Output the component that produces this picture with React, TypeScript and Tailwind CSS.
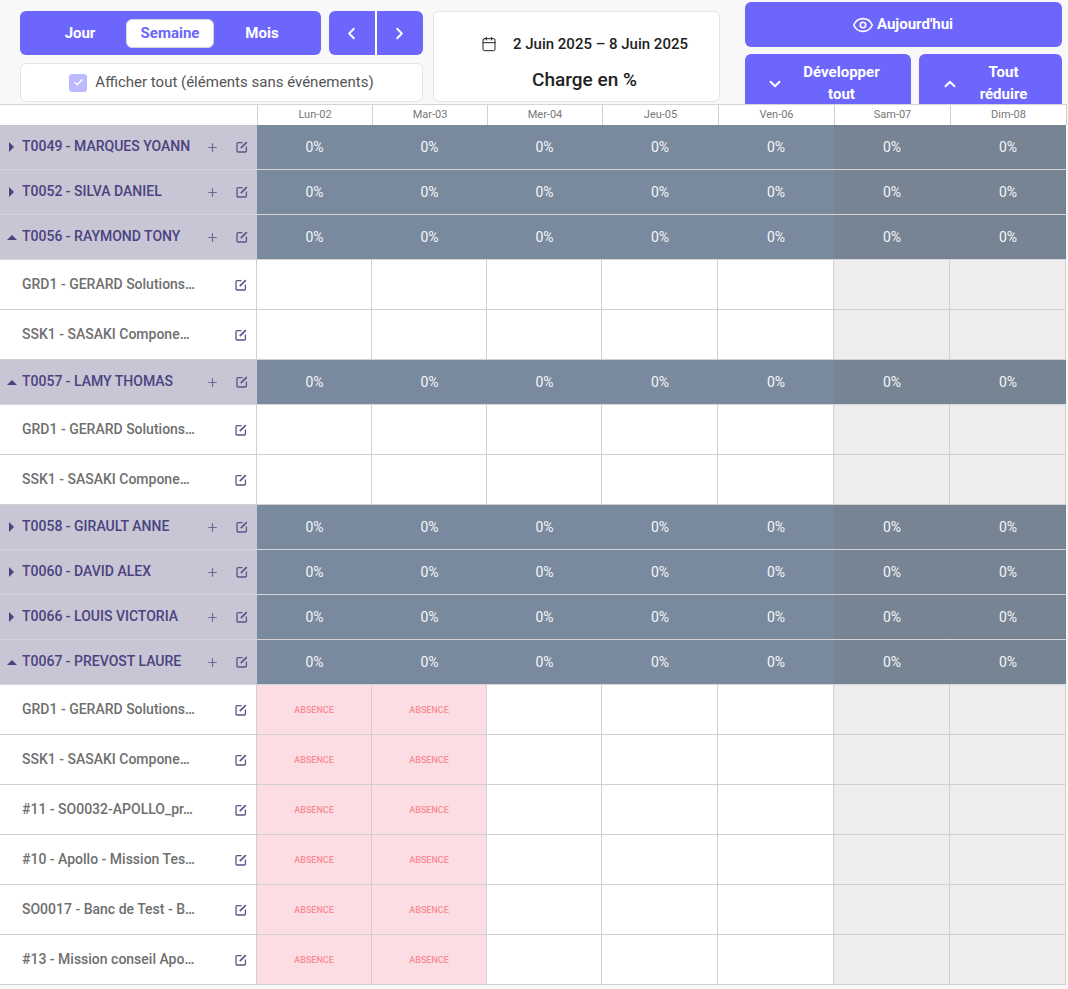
import React from 'react';
import { Calendar, Check, ChevronDown, ChevronLeft, ChevronRight, ChevronUp, Eye, Plus } from 'lucide-react';

const days = ['Lun-02', 'Mar-03', 'Mer-04', 'Jeu-05', 'Ven-06', 'Sam-07', 'Dim-08'];

const grd = 'GRD1 - GERARD Solutions…';
const ssk = 'SSK1 - SASAKI Compone…';

type Group = { name: string; open?: boolean; subs?: string[]; absent?: boolean };

const groups: Group[] = [
  { name: 'T0049 - MARQUES YOANN' },
  { name: 'T0052 - SILVA DANIEL' },
  { name: 'T0056 - RAYMOND TONY', open: true, subs: [grd, ssk] },
  { name: 'T0057 - LAMY THOMAS', open: true, subs: [grd, ssk] },
  { name: 'T0058 - GIRAULT ANNE' },
  { name: 'T0060 - DAVID ALEX' },
  { name: 'T0066 - LOUIS VICTORIA' },
  {
    name: 'T0067 - PREVOST LAURE',
    open: true,
    absent: true,
    subs: [
      grd,
      ssk,
      '#11 - SO0032-APOLLO_pr…',
      '#10 - Apollo - Mission Tes…',
      'SO0017 - Banc de Test - B…',
      '#13 - Mission conseil Apo…',
    ],
  },
];

const EditIcon = () => (
  <svg width="12" height="12" viewBox="0 0 12 12" fill="none" className="shrink-0 text-[#5b5489]" stroke="currentColor">
    <path d="M6.5 1.6H2a1 1 0 0 0-1 1v7.4a1 1 0 0 0 1 1h7.4a1 1 0 0 0 1-1V5.5" strokeWidth="1.3" />
    <path d="M4.8 7.2 10.8 1.2" strokeWidth="1.7" />
  </svg>
);

const GroupRow = ({ group }: { group: Group }) => (
  <div className="flex h-[45px] border-b border-[#d4d4d8]">
    <div className="flex w-[257px] shrink-0 items-center bg-[#c8c5d4] pl-[7px] pr-[9px] text-[#4a4380]">
      <span className="flex w-[15px] shrink-0 items-center">
        {group.open ? (
          <svg width="10" height="5" viewBox="0 0 10 5" className="fill-[#4a4380]">
            <path d="M5 0 L10 5 L0 5 Z" />
          </svg>
        ) : (
          <svg width="5" height="10" viewBox="0 0 5 10" className="ml-[2px] fill-[#4a4380]">
            <path d="M0 0 L5 5 L0 10 Z" />
          </svg>
        )}
      </span>
      <span className="flex-1 -translate-y-px truncate text-[14px] font-medium">{group.name}</span>
      <Plus size={13} strokeWidth={2.25} className="mr-[17px] text-[#6f6a94]" />
      <EditIcon />
    </div>
    <div className="grid flex-1 grid-cols-[115px_115px_115px_116px_116px_116px_116px] bg-[#7a8a9e]">
      {days.map((d, i) => (
        <div
          key={d}
          className={`flex items-center justify-center text-[14px] text-[#f4f6f8] ${
            i > 4 ? 'border-r border-[#74818f] bg-[#778494] pl-[1px]' : ''
          }`}
        >
          0%
        </div>
      ))}
    </div>
  </div>
);

const SubRow = ({ label, absent }: { label: string; absent?: boolean }) => (
  <div className="flex h-[50px] border-b border-[#d0d0d0]">
    <div className="flex w-[257px] shrink-0 items-center border-r border-[#d0d0d0] bg-white pl-[22px] pr-[9px]">
      <span className="flex-1 truncate text-[14px] font-medium text-[#6f6f6f]">{label}</span>
      <EditIcon />
    </div>
    <div className="grid flex-1 grid-cols-[115px_115px_115px_116px_116px_116px_116px]">
      {days.map((d, i) => (
        <div
          key={d}
          className={`flex items-center justify-center border-r border-[#d0d0d0] pt-[2px] text-[9px] font-medium text-[#f98c94] ${
            i > 4 ? 'bg-[#eeeeee]' : absent && i < 2 ? 'bg-[#fcdde4]' : 'bg-white'
          }`}
        >
          {absent && i < 2 ? 'ABSENCE' : ''}
        </div>
      ))}
    </div>
  </div>
);

export default function App() {
  return (
    <div className="min-h-[989px] w-[1068px] overflow-hidden bg-[#f8f8f8] font-['Roboto',sans-serif]">
      <div className="flex h-[104px] overflow-hidden">
        <div className="ml-[20px] mt-[11px] flex w-[403px] flex-col gap-[8px]">
          <div className="flex h-[44px] gap-[8px]">
            <div className="flex w-[301px] items-center rounded-md bg-[#6c66fd] pl-[14px] text-[15px] font-bold text-white">
              <span className="w-[92px] text-center">Jour</span>
              <span className="flex h-[29px] w-[88px] items-center justify-center rounded-md border border-[#d4d4d8] bg-white text-[#6c66fd]">
                Semaine
              </span>
              <span className="w-[96px] text-center">Mois</span>
            </div>
            <div className="flex flex-1 overflow-hidden rounded-md bg-[#6c66fd] text-white">
              <span className="flex w-[48px] items-center justify-center border-r-2 border-white pr-[1px]">
                <ChevronLeft size={19} strokeWidth={2.25} />
              </span>
              <span className="flex flex-1 items-center justify-center pr-[2px]">
                <ChevronRight size={19} strokeWidth={2.25} />
              </span>
            </div>
          </div>
          <div className="flex h-[39px] items-center justify-center gap-[8px] rounded-md border border-[#e4e4e7] bg-white text-[15px] text-[#555555]">
            <span className="flex h-[18px] w-[18px] items-center justify-center rounded-[3px] bg-[#bcb9fe]">
              <Check size={11} strokeWidth={3} className="text-white" />
            </span>
            Afficher tout (éléments sans événements)
          </div>
        </div>

        <div className="ml-[10px] mt-[11px] flex h-[91px] w-[287px] flex-col items-center rounded-md border border-[#e4e4e7] bg-white pl-[16px] text-[#222222]">
          <div className="mt-[21px] flex items-center gap-[16px] text-[15px] font-medium">
            <Calendar size={16} strokeWidth={1.5} />
            2 Juin 2025 – 8 Juin 2025
          </div>
          <div className="mt-[10px] text-[19px] font-medium">Charge en %</div>
        </div>

        <div className="ml-[25px] mt-[2px] flex w-[317px] flex-col gap-[7px]">
          <div className="flex h-[45px] shrink-0 items-center justify-center gap-[3px] rounded-md bg-[#6c66fd] pr-[2px] text-[15px] font-bold text-white">
            <Eye size={22} strokeWidth={1.75} />
            Aujourd'hui
          </div>
          <div className="flex h-[60px] shrink-0 gap-[8px] text-[15px] font-bold leading-[22px] text-white">
            <div className="flex w-[166px] items-start rounded-t-md bg-[#6c66fd] pl-[21px] pr-[12px] pt-[7px]">
              <ChevronDown size={18} strokeWidth={2.5} className="mt-[14px] shrink-0" />
              <span className="flex-1 text-center">
                Développer
                <br />
                tout
              </span>
            </div>
            <div className="flex w-[143px] items-start rounded-t-md bg-[#6c66fd] pl-[22px] pr-[14px] pt-[7px]">
              <ChevronUp size={18} strokeWidth={2.5} className="mt-[14px] shrink-0" />
              <span className="flex-1 text-center">
                Tout
                <br />
                réduire
              </span>
            </div>
          </div>
        </div>
      </div>

      <div className="w-[1066px]">
        <div className="flex h-[21px] w-[1067px] border-t border-[#d4d4d8] bg-white">
          <div className="w-[258px] shrink-0 border-r border-[#d0d0d0]" />
          <div className="grid flex-1 grid-cols-[115px_115px_115px_116px_116px_116px_116px]">
            {days.map((d) => (
              <div
                key={d}
                className="flex items-center justify-center border-r border-[#d0d0d0] text-[11px] text-[#777777]"
              >
                {d}
              </div>
            ))}
          </div>
        </div>
        {groups.map((g) => (
          <React.Fragment key={g.name}>
            <GroupRow group={g} />
            {g.subs?.map((s) => (
              <SubRow key={s} label={s} absent={g.absent} />
            ))}
          </React.Fragment>
        ))}
      </div>
    </div>
  );
}
